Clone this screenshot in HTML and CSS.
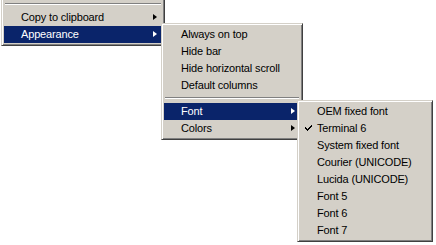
FILE: index.html
```html
<!DOCTYPE html>
<html lang="en">
<head>
    <meta charset="UTF-8">
    <title>Menu</title>
    <link rel="stylesheet" href="styles.css">
</head>
<body>
    <!-- Root context menu (top is off screen) -->
    <div class="menu menu-root">
        <div class="sep"></div>
        <div class="item has-sub">Copy to clipboard</div>
        <div class="item has-sub active">Appearance</div>
    </div>

    <!-- Appearance submenu -->
    <div class="menu menu-appearance">
        <div class="item">Always on top</div>
        <div class="item">Hide bar</div>
        <div class="item">Hide horizontal scroll</div>
        <div class="item">Default columns</div>
        <div class="sep"></div>
        <div class="item has-sub active">Font</div>
        <div class="item has-sub">Colors</div>
    </div>

    <!-- Font submenu -->
    <div class="menu menu-font">
        <div class="item">OEM fixed font</div>
        <div class="item checked">
            <svg class="check" width="7" height="7" viewBox="0 0 7 7">
                <path d="M0 2h1v1h1v1h1v-1h1v-1h1v-1h1v-1h1v2h-1v1h-1v1h-1v1h-1v1h-1v-1h-1v-1h-1z" fill="#000"/>
            </svg>
            Terminal 6
        </div>
        <div class="item">System fixed font</div>
        <div class="item">Courier (UNICODE)</div>
        <div class="item">Lucida (UNICODE)</div>
        <div class="item">Font 5</div>
        <div class="item">Font 6</div>
        <div class="item">Font 7</div>
    </div>
</body>
</html>
```
FILE: styles.css
```css
/* Reset */
* {
    box-sizing: border-box;
    margin: 0;
    padding: 0;
}

body {
    position: relative;
    width: 436px;
    height: 245px;
    overflow: hidden;
    background-color: #fff;
    font-family: "Liberation Sans", Arial, sans-serif;
    font-size: 11px;
    letter-spacing: -0.15px;
    color: #000;
}

/* Classic 3D menu frame */
.menu {
    position: absolute;
    background-color: #d4d0c8;
    border: 1px solid;
    border-color: #d4d0c8 #404040 #404040 #d4d0c8;
    box-shadow: inset 1px 1px #fff, inset -1px -1px #808080;
    padding: 2px;
}

.menu-root {
    left: 1px;
    top: -3px;
    width: 164px;
    z-index: 1;
}

.menu-appearance {
    left: 161px;
    top: 23px;
    width: 142px;
    z-index: 2;
}

.menu-font {
    left: 297px;
    top: 100px;
    width: 136px;
    z-index: 3;
}

/* Items */
.item {
    position: relative;
    height: 17px;
    line-height: 17px;
    padding-left: 17px;
    white-space: nowrap;
}

.item.active {
    background-color: #0a246a;
    color: #fff;
}

/* Submenu arrow */
.has-sub::after {
    content: "";
    position: absolute;
    right: 5px;
    top: 5px;
    border-style: solid;
    border-width: 3.5px 0 3.5px 4px;
    border-color: transparent transparent transparent #000;
}

.has-sub.active::after {
    border-left-color: #fff;
}

.check {
    position: absolute;
    left: 5px;
    top: 5px;
    shape-rendering: crispEdges;
}

/* Separator */
.sep {
    height: 9px;
    padding-top: 3px;
    margin: 0 1px;
}

.sep::before {
    content: "";
    display: block;
    height: 1px;
    background-color: #808080;
    border-bottom: 1px solid #fff;
    box-sizing: content-box;
}
```
